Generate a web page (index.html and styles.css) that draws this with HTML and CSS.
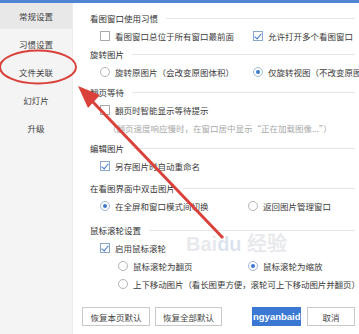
FILE: index.html
```
<!DOCTYPE html>
<html lang="zh-CN">
<head>
    <meta charset="UTF-8">
    <title>设置</title>
    <link rel="stylesheet" href="styles.css">
</head>
<body>

    <div class="window">
        <!-- Side menu -->
        <ul class="side">
            <li class="active">常规设置</li>
            <li>习惯设置</li>
            <li>文件关联</li>
            <li>幻灯片</li>
            <li>升级</li>
        </ul>

        <!-- Settings -->
        <div class="main">
            <div class="group">
                <div class="title">看图窗口使用习惯</div>
                <div class="row">
                    <span class="opt"><i class="box"></i>看图窗口总位于所有窗口最前面</span>
                    <span class="opt"><i class="box on"></i>允许打开多个看图窗口</span>
                </div>
            </div>

            <div class="group g0">
                <div class="title">旋转图片</div>
                <div class="row">
                    <span class="opt"><i class="dot"></i>旋转原图片（会改变原图体积）</span>
                    <span class="opt"><i class="dot on"></i>仅旋转视图（不改变原图</span>
                </div>
            </div>

            <div class="group">
                <div class="title">翻页等待</div>
                <div class="row">
                    <span class="opt"><i class="box"></i>翻页时智能显示等待提示</span>
                </div>
                <div class="note">（翻页速度响应慢时，在窗口居中显示“正在加载图像...”）</div>
            </div>

            <div class="group">
                <div class="title">编辑图片</div>
                <div class="row">
                    <span class="opt"><i class="box on"></i>另存图片时自动重命名</span>
                </div>
            </div>

            <div class="group g4">
                <div class="title">在看图界面中双击图片</div>
                <div class="row row-b">
                    <span class="opt"><i class="dot on"></i>在全屏和窗口模式间切换</span>
                    <span class="opt"><i class="dot"></i>返回图片管理窗口</span>
                </div>
            </div>

            <div class="group g6">
                <div class="title">鼠标滚轮设置</div>
                <div class="row">
                    <span class="opt"><i class="box on"></i>启用鼠标滚轮</span>
                </div>
                <div class="row sub">
                    <span class="opt"><i class="dot"></i>鼠标滚轮为翻页</span>
                    <span class="opt"><i class="dot on"></i>鼠标滚轮为缩放</span>
                </div>
                <div class="row sub">
                    <span class="opt full"><i class="dot"></i>上下移动图片（看长图更方便，滚轮可上下移动图片并翻页）</span>
                </div>
            </div>

            <div class="actions">
                <button class="btn b1">恢复本页默认</button>
                <button class="btn b2">恢复全部默认</button>
                <button class="btn ok">ngyanbaid</button>
                <button class="btn cancel">取消</button>
            </div>
        </div>

        <!-- Watermark -->
        <div class="mark">Bai<span>du</span> 经验</div>

        <!-- Red annotation -->
        <svg class="annot" width="359" height="334" viewBox="0 0 359 334">
            <ellipse cx="38" cy="67" rx="38" ry="16.5" fill="none" stroke="#d9413a" stroke-width="2"/>
            <line x1="92" y1="101" x2="223" y2="238" stroke="#d9413a" stroke-width="3"/>
            <polygon points="78,86 100,95 88,108" fill="#d9413a"/>
        </svg>
    </div>

</body>
</html>
```

FILE: styles.css
```
/* General */
* {
    margin: 0;
    padding: 0;
    box-sizing: border-box;
}
body {
    width: 359px;
    height: 334px;
    overflow: hidden;
    background: #fff;
    font-family: "Noto Sans CJK SC", "Noto Sans", sans-serif;
    font-size: 8.5px;
    color: #3a3a3a;
}

.window {
    position: relative;
    height: 334px;
    border-top: 3px solid #4f85d2;
    display: grid;
    grid-template-columns: 73px 1fr;
}

/* Side menu */
.side {
    list-style: none;
    background: #f4f4f4;
    border-right: 1px solid #ececec;
}
.side li {
    height: 28px;
    line-height: 27px;
    text-align: center;
    color: #444;
}
.side li.active {
    background: #e8e8e8;
    height: 26px;
    line-height: 26px;
    margin-bottom: 2px;
}

/* Settings */
.main {
    padding: 6px 0 0 17px;
    overflow: hidden;
    white-space: nowrap;
}
.group {
    margin-top: 2px;
}
.group:first-child,
.group.g0 {
    margin-top: 0;
}
.group.g4 {
    margin-top: 4px;
}
.group.g6 {
    margin-top: 6px;
}
.title {
    height: 18px;
    display: flex;
    align-items: center;
    gap: 8px;
    color: #333;
}
.title::after {
    content: "";
    flex: 1;
    margin-right: 4px;
    border-top: 1px solid #e6e6e6;
}

.row {
    height: 18px;
    padding-left: 10px;
    display: grid;
    grid-template-columns: 153px 1fr;
    align-items: center;
}
.row.row-b {
    grid-template-columns: 148px 1fr;
}
.row.sub {
    padding-left: 28px;
    grid-template-columns: 130px 1fr;
}
.opt {
    display: flex;
    align-items: center;
    gap: 5px;
}
.opt.full {
    grid-column: 1 / -1;
    letter-spacing: -0.1px;
}
.note {
    height: 18px;
    line-height: 18px;
    padding-left: 18px;
    color: #a8a8a8;
}

/* Check boxes and radios */
.box,
.dot {
    position: relative;
    width: 10px;
    height: 10px;
    flex: none;
    border: 1px solid #a9a9a9;
    background: #fff;
}
.dot {
    border-radius: 50%;
    border-color: #b5b5b5;
}
.box.on {
    border-color: #8aa6cf;
}
.box.on::after {
    content: "";
    position: absolute;
    left: 2px;
    top: 0;
    width: 3px;
    height: 6px;
    border: solid #3d78d0;
    border-width: 0 1.5px 1.5px 0;
    transform: rotate(40deg);
}
.dot.on {
    border-color: #9fb7dc;
}
.dot.on::after {
    content: "";
    position: absolute;
    left: 2px;
    top: 2px;
    width: 4px;
    height: 4px;
    border-radius: 50%;
    background: #3d78d0;
}

/* Buttons */
.actions {
    margin: 14px 0 0 -8px;
    display: flex;
    gap: 5px;
}
.btn {
    height: 19px;
    border: 1px solid #c9c9c9;
    background: #fff;
    font-family: inherit;
    font-size: 8.5px;
    color: #444;
}
.b1 { width: 68px; }
.b2 { width: 67px; }
.ok {
    width: 49px;
    margin-left: 25px;
    padding: 0;
    border-color: #3a78d4;
    background: #3a78d4;
    color: #fff;
    font-family: "Liberation Sans", sans-serif;
    font-size: 9.5px;
    font-weight: bold;
}
.cancel {
    width: 48px;
    margin-left: 1px;
}

/* Overlays */
.mark {
    position: absolute;
    left: 186px;
    top: 225px;
    font-family: "Liberation Sans", sans-serif;
    font-size: 20px;
    font-weight: bold;
    color: rgba(170, 178, 190, 0.3);
}
.mark span {
    color: rgba(130, 155, 200, 0.28);
}
.annot {
    position: absolute;
    left: 0;
    top: -3px;
    pointer-events: none;
}
```
